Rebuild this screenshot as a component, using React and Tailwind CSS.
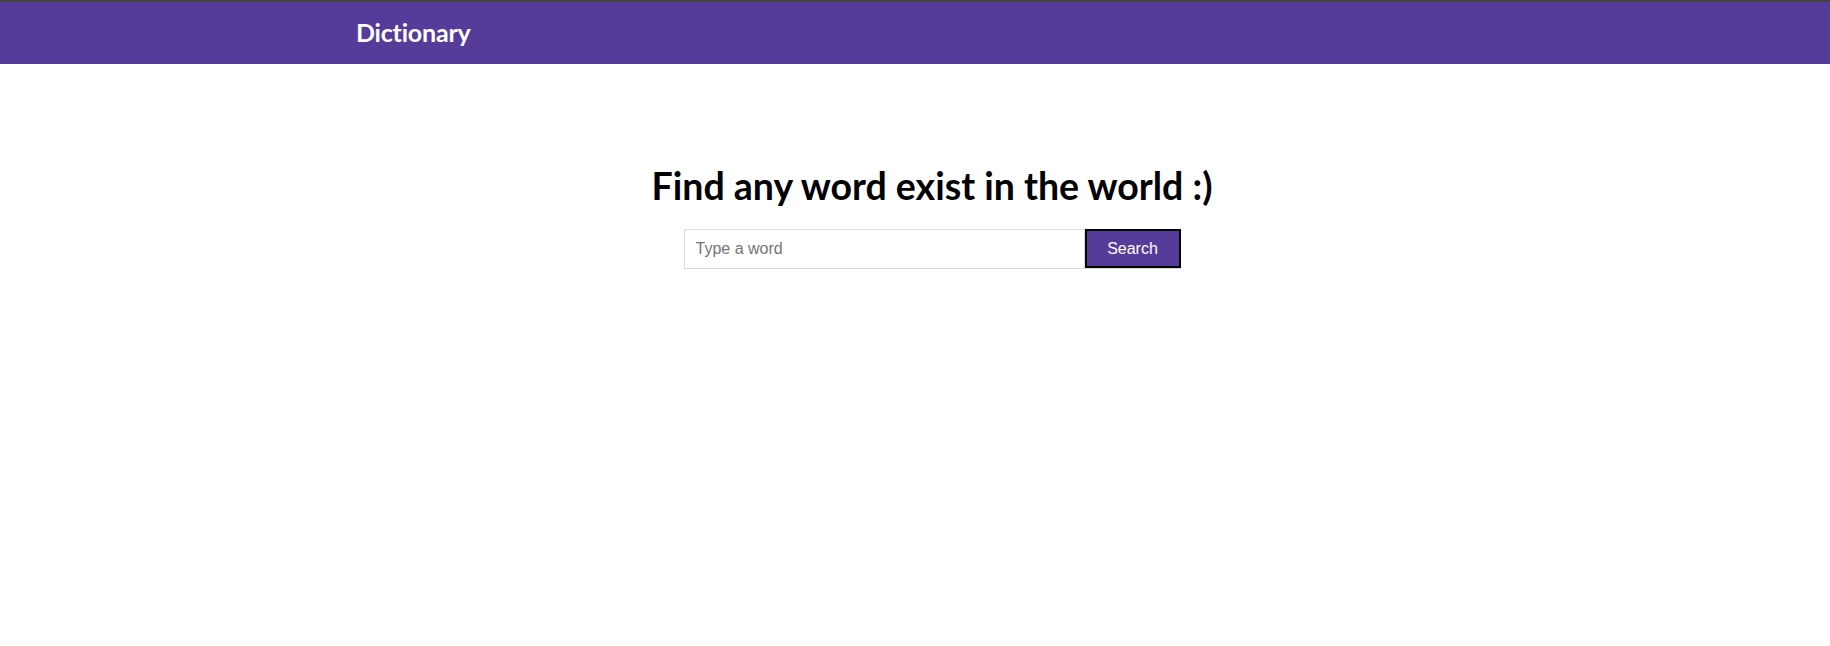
export default function App() {
  return (
    <div className="min-h-[646px] bg-white font-['Lato',sans-serif]">
      <header className="border-t-2 border-[#444] bg-[#553c9a]">
        <div className="h-[62px] flex items-center pl-[356px]">
          <span className="text-white text-[25px] font-bold tracking-[-0.2px]">Dictionary</span>
        </div>
      </header>

      <main className="flex flex-col items-center pt-[98px] pl-[34px]">
        <h1 className="text-black text-[37.5px] font-bold leading-[48px]">Find any word exist in the world :)</h1>
        <form className="mt-[19px] flex items-start" onSubmit={(e) => e.preventDefault()}>
          <input
            type="text"
            placeholder="Type a word"
            className="w-[401px] h-[40px] border border-[#dcdcdc] px-[11px] text-[16px] font-['Liberation_Sans',sans-serif] placeholder:text-[#757575] outline-none"
          />
          <button
            type="submit"
            className="w-[96px] h-[39px] bg-[#553c9a] border-2 border-black text-white text-[16px] font-['Liberation_Sans',sans-serif] shadow-[0_1px_0_#dcdcdc]"
          >
            Search
          </button>
        </form>
      </main>
    </div>
  );
}
